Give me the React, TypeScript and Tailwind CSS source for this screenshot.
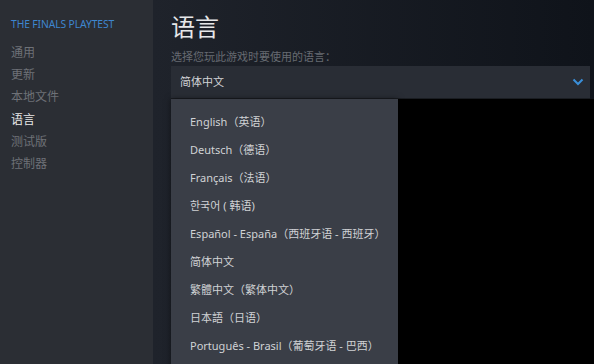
import React from "react";

const nav = ["通用", "更新", "本地文件", "语言", "测试版", "控制器"];
const langs = [
  "English（英语）",
  "Deutsch（德语）",
  "Français（法语）",
  "한국어 ( 韩语)",
  "Español - España（西班牙语 - 西班牙）",
  "简体中文",
  "繁體中文（繁体中文）",
  "日本語（日语）",
  "Português - Brasil（葡萄牙语 - 巴西）",
];

export default function App() {
  return (
    <div
      className="flex w-[594px] h-[364px] overflow-hidden"
      style={{ fontFamily: '"Noto Sans", "Noto Sans CJK SC", sans-serif' }}
    >
      <div className="w-[153px] shrink-0 bg-[#2b2e34] pl-[11px] pt-[15px]">
        <div className="text-[10.3px] leading-[18px] text-[#3e86cf] tracking-[-0.1px]">
          THE FINALS PLAYTEST
        </div>
        <div className="mt-[9px] flex flex-col">
          {nav.map((n) => (
            <div
              key={n}
              className={`h-[22.2px] leading-[22px] text-[12px] ${
                n === "语言" ? "text-[#e8e8e8]" : "text-[#6e7177]"
              }`}
            >
              {n}
            </div>
          ))}
        </div>
      </div>
      <div className="flex-1 flex flex-col pl-[18px] pr-[4px] bg-gradient-to-r from-[#1f232b] to-[#0f131a]">
        <div className="pt-[11px] h-[47px] text-[24px] leading-[32px] text-[#e6e7e9]">语言</div>
        <div className="h-[19px] leading-[19px] text-[11px] text-[#676b72]">
          选择您玩此游戏时要使用的语言：
        </div>
        <div className="h-[32px] shrink-0 flex items-center justify-between bg-[#292d35] pl-[9px] pr-[6px] shadow-[0_1px_0_#1a1d22]">
          <span className="text-[11px] text-[#d2d4d7]">简体中文</span>
          <svg width="12" height="8" viewBox="0 0 12 8">
            <path d="M1.5 1.5 L6 6 L10.5 1.5" stroke="#3a8fd9" strokeWidth="2" fill="none" />
          </svg>
        </div>
        <div className="relative flex-1 mt-[1px] bg-black -mr-[4px]">
          <div className="absolute left-0 top-0 w-[227px] h-[280px] bg-[#3a3e47] pt-[9px] pl-[19px] shadow-[0_0_6px_rgba(0,0,0,0.5)]">
            {langs.map((l) => (
              <div key={l} className="h-[28px] leading-[28px] text-[11px] text-[#d0d2d5] whitespace-nowrap">
                {l}
              </div>
            ))}
          </div>
        </div>
      </div>
    </div>
  );
}
